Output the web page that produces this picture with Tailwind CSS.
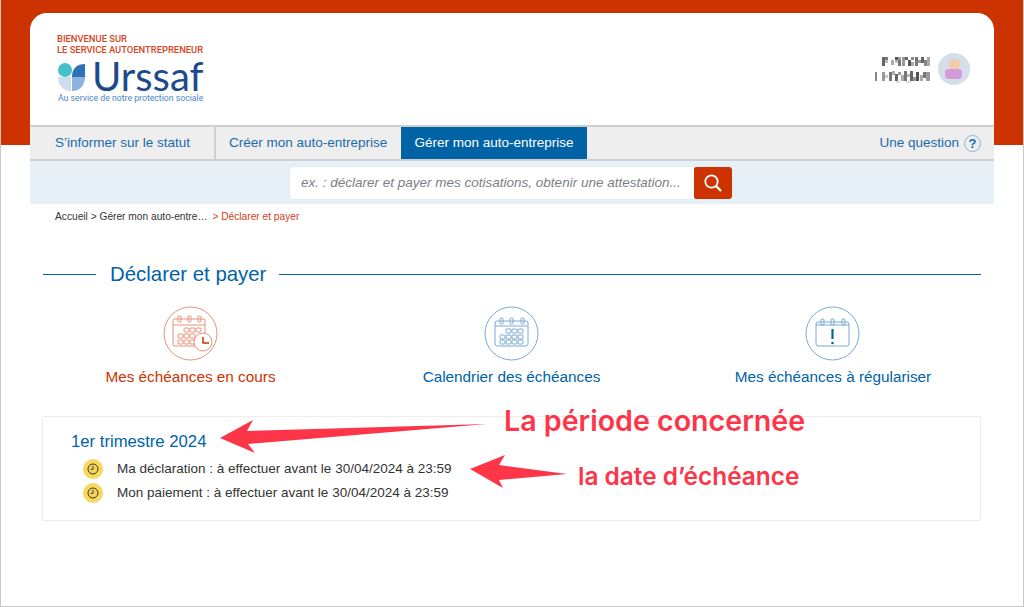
<!DOCTYPE html>
<html lang="fr">
  <head>
    <meta charset="UTF-8" />
    <title>Déclarer et payer</title>
    <script src="https://cdn.jsdelivr.net/npm/@tailwindcss/browser@4"></script>
  </head>
  <body class="bg-white font-['Liberation_Sans',Arial,sans-serif] text-[#333]">
    <div class="relative h-[607px] w-[1024px] overflow-hidden border border-[#c9c9c9] border-t-0">
      <!-- Bandeau orange -->
      <div class="absolute left-0 top-0 h-[145px] w-full bg-[#cc3300]"></div>

      <div class="relative ml-[29px] mt-[13px] w-[964px]">
        <!-- Header -->
        <header class="flex h-[112px] justify-between rounded-t-[17px] bg-white pl-[27px] pr-[24px]">
          <div class="pt-[20px]">
            <p class="whitespace-nowrap font-['Roboto',sans-serif] text-[9.4px] font-medium uppercase leading-[11px] text-[#d9441e]">Bienvenue sur<br />Le service autoentrepreneur</p>
            <div class="mt-[5px] flex h-[32px] items-center">
              <svg width="30" height="29" viewBox="0 0 30 29" class="mt-[1px]">
                <path d="M1 15h13v14C6 29 1 23 1 15z" fill="#cfdcf0" />
                <path d="M15 15h13c0 8-5 14-13 14z" fill="#8eb2de" />
                <path d="M15 15C15 6 20 2 28 2v13z" fill="#2c72b8" />
                <circle cx="8" cy="8" r="7" fill="#45c1cb" />
              </svg>
              <span class="ml-[5px] font-['Lato',sans-serif] text-[40px] font-normal leading-[32px] text-[#1e4a8c]">Urssaf</span>
            </div>
            <p class="mt-[1px] whitespace-nowrap pl-px font-['Roboto',sans-serif] text-[8.7px] leading-[11px] text-[#4a86c8]">Au service de notre protection sociale</p>
          </div>
          <div class="flex items-start gap-[7px] pt-[40px]">
            <!-- nom floute -->
            <svg width="56" height="27" viewBox="0 0 56 27" class="mt-[3px]">
              <rect x="7" y="1" width="3" height="9" fill="#666" /><rect x="10" y="1" width="3" height="3" fill="#777" /><rect x="10" y="4" width="3" height="3" fill="#bbb" />
              <rect x="16" y="4" width="3" height="5" fill="#aaa" /><rect x="20" y="1" width="3" height="3" fill="#555" /><rect x="23" y="1" width="3" height="3" fill="#999" />
              <rect x="20" y="4" width="3" height="3" fill="#bbb" /><rect x="23" y="4" width="3" height="6" fill="#777" /><rect x="27" y="1" width="3" height="9" fill="#999" />
              <rect x="30" y="1" width="3" height="3" fill="#666" /><rect x="33" y="4" width="3" height="6" fill="#555" /><rect x="36" y="1" width="3" height="3" fill="#888" />
              <rect x="36" y="6" width="3" height="4" fill="#aaa" /><rect x="40" y="1" width="3" height="9" fill="#777" /><rect x="43" y="4" width="3" height="3" fill="#999" />
              <rect x="46" y="1" width="3" height="6" fill="#666" /><rect x="49" y="4" width="3" height="6" fill="#888" /><rect x="52" y="1" width="3" height="9" fill="#aaa" />
              <rect x="0" y="16" width="2" height="9" fill="#888" /><rect x="7" y="16" width="3" height="9" fill="#999" /><rect x="10" y="19" width="3" height="3" fill="#ccc" />
              <rect x="14" y="16" width="3" height="9" fill="#777" /><rect x="17" y="15" width="3" height="4" fill="#aaa" /><rect x="20" y="18" width="3" height="7" fill="#666" />
              <rect x="23" y="16" width="3" height="3" fill="#999" /><rect x="26" y="19" width="3" height="6" fill="#aaa" /><rect x="29" y="15" width="3" height="10" fill="#777" />
              <rect x="32" y="18" width="3" height="3" fill="#bbb" /><rect x="35" y="15" width="3" height="10" fill="#666" /><rect x="38" y="21" width="3" height="4" fill="#999" />
              <rect x="41" y="16" width="3" height="9" fill="#555" /><rect x="45" y="19" width="3" height="6" fill="#aaa" /><rect x="48" y="16" width="3" height="6" fill="#777" />
              <rect x="51" y="16" width="4" height="9" fill="#999" /><rect x="21" y="25" width="4" height="2" fill="#ddd" /><rect x="31" y="25" width="5" height="2" fill="#ddd" />
            </svg>
            <div class="relative h-[32px] w-[32px] overflow-hidden rounded-full bg-[#d5dde8]">
              <div class="absolute left-[11px] top-[6px] h-[11px] w-[11px] rounded-full bg-[#f2cba8]"></div>
              <div class="absolute left-[7px] top-[16px] h-[10px] w-[17px] rounded-[4px] bg-[#d49adb]"></div>
            </div>
          </div>
        </header>

        <!-- Navigation -->
        <nav class="flex h-[36px] items-stretch border-y-2 border-[#cfcfcf] bg-[#eeeeee] text-[13.5px] text-[#1a6bab]">
          <a class="flex w-[186px] items-center border-r-2 border-[#cfcfcf] pl-[25px]">S’informer sur le statut</a>
          <a class="flex w-[185px] items-center pl-[13px]">Créer mon auto-entreprise</a>
          <a class="flex w-[186px] items-center justify-center bg-[#0063a6] text-white">Gérer mon auto-entreprise</a>
          <a class="ml-auto flex items-center gap-[5px] pr-[13px]">Une question
            <span class="flex h-[17px] w-[17px] items-center justify-center rounded-full border border-[#8db4d6] text-[13px] font-bold leading-none">?</span>
          </a>
        </nav>

        <!-- Recherche -->
        <div class="flex h-[43px] items-center justify-center bg-[#e7f0f7] pr-[2px]">
          <div class="flex h-[32px] w-[442px] overflow-hidden rounded-[3px] bg-white shadow-[0_0_1px_#b9c4cd]">
            <span class="flex-1 whitespace-nowrap pl-[11px] text-[13.5px] italic leading-[32px] text-[#7b7f85]">ex. : déclarer et payer mes cotisations, obtenir une attestation...</span>
            <span class="flex w-[38px] items-center justify-center rounded-[2px] bg-[#cc3300]">
              <svg width="20" height="20" viewBox="0 0 20 20" fill="none" stroke="white" stroke-width="1.8">
                <circle cx="8.5" cy="8.5" r="6.2" />
                <path d="M13 13l5 5" stroke-width="2.4" />
              </svg>
            </span>
          </div>
        </div>
      </div>

      <div class="relative ml-[29px] w-[964px]">
        <!-- Fil d'ariane -->
        <p class="pl-[25px] pt-[6px] text-[10.2px] leading-[13px] text-[#333]">Accueil &gt; Gérer mon auto-entre… <span class="ml-[2px] text-[#d9401a]">&gt; Déclarer et payer</span></p>

        <!-- Titre -->
        <div class="ml-[13px] mt-[39px] flex w-[938px] items-center">
          <div class="h-px w-[53px] bg-[#0063a6]"></div>
          <h1 class="pl-[14px] pr-[13px] text-[20.4px] leading-[24px] text-[#0063a6]">Déclarer et payer</h1>
          <div class="h-px flex-1 bg-[#0063a6]"></div>
        </div>

        <!-- Onglets -->
        <div class="ml-[13px] mt-[20px] flex w-[938px] text-[15.3px] leading-[18px]">
          <div class="flex w-[295px] flex-col items-center text-[#cc3300]">
            <svg width="56" height="56" viewBox="0 0 56 56" fill="none" stroke="#e8907a" stroke-width="1">
              <circle cx="27.5" cy="27.5" r="26.5" />
              <rect x="10" y="13" width="32" height="27" rx="2" />
              <path d="M10 19h32" />
              <rect x="15" y="10" width="3" height="6" rx="1" /><rect x="25" y="10" width="3" height="6" rx="1" /><rect x="35" y="10" width="3" height="6" rx="1" />
              <rect x="21" y="22" width="5" height="4" rx="1" /><rect x="27" y="22" width="5" height="4" rx="1" /><rect x="33" y="22" width="5" height="4" rx="1" />
              <rect x="15" y="28" width="5" height="4" rx="1" /><rect x="21" y="28" width="5" height="4" rx="1" /><rect x="27" y="28" width="5" height="4" rx="1" />
              <rect x="15" y="34" width="5" height="4" rx="1" /><rect x="21" y="34" width="5" height="4" rx="1" /><rect x="27" y="34" width="5" height="4" rx="1" />
              <circle cx="40" cy="36" r="9" fill="white" />
              <path d="M40 31v6h6" stroke="#cc3300" stroke-width="1.5" />
            </svg>
            <span class="mt-[6px]">Mes échéances en cours</span>
          </div>
          <div class="flex w-[347px] flex-col items-center text-[#0063a6]">
            <svg width="56" height="56" viewBox="0 0 56 56" fill="none" stroke="#7aa9d6" stroke-width="1">
              <circle cx="27.5" cy="27.5" r="26.5" />
              <rect x="11" y="15" width="33" height="25" rx="2" />
              <path d="M11 20h33" />
              <rect x="16" y="12" width="3" height="6" rx="1" /><rect x="26" y="12" width="3" height="6" rx="1" /><rect x="37" y="12" width="3" height="6" rx="1" />
              <rect x="22" y="23" width="5" height="4" rx="1" /><rect x="28" y="23" width="5" height="4" rx="1" /><rect x="34" y="23" width="5" height="4" rx="1" />
              <rect x="16" y="29" width="5" height="4" rx="1" /><rect x="22" y="29" width="5" height="4" rx="1" /><rect x="28" y="29" width="5" height="4" rx="1" /><rect x="34" y="29" width="5" height="4" rx="1" />
              <rect x="16" y="34" width="5" height="4" rx="1" /><rect x="22" y="34" width="5" height="4" rx="1" /><rect x="28" y="34" width="5" height="4" rx="1" /><rect x="34" y="34" width="5" height="4" rx="1" />
            </svg>
            <span class="mt-[6px]">Calendrier des échéances</span>
          </div>
          <div class="flex w-[296px] flex-col items-center text-[#0063a6]">
            <svg width="56" height="56" viewBox="0 0 56 56" fill="none" stroke="#7aa9d6" stroke-width="1">
              <circle cx="27.5" cy="27.5" r="26.5" />
              <rect x="11" y="16" width="33" height="24" rx="2" />
              <path d="M11 19h33" />
              <rect x="16" y="13" width="3" height="6" rx="1" /><rect x="26" y="13" width="3" height="6" rx="1" /><rect x="37" y="13" width="3" height="6" rx="1" />
              <path d="M27.5 23v10" stroke="#0063a6" stroke-width="2.2" />
              <circle cx="27.5" cy="37" r="1.3" fill="#0063a6" stroke="none" />
            </svg>
            <span class="mt-[6px]">Mes échéances à régulariser</span>
          </div>
        </div>

        <!-- Periode -->
        <section class="ml-[12px] mt-[30px] h-[105px] w-[939px] rounded-[2px] border border-[#ececec] pl-[28px] pt-[15px]">
          <h2 class="text-[16.7px] leading-[19px] text-[#0063a6]">1er trimestre 2024</h2>
          <div class="mt-[6px] flex h-[24px] items-center gap-[14px] pl-[12px] text-[13.5px] text-[#333]">
            <span class="flex h-[20px] w-[20px] items-center justify-center rounded-full bg-[#f8d75e]">
              <svg width="12" height="12" viewBox="0 0 12 12" fill="none" stroke="#3a3420" stroke-width="1"><circle cx="6" cy="6" r="5" /><path d="M6 3v3.3H3.6" /></svg>
            </span>
            Ma déclaration : à effectuer avant le 30/04/2024 à 23:59
          </div>
          <div class="flex h-[24px] items-center gap-[14px] pl-[12px] text-[13.5px] text-[#333]">
            <span class="flex h-[20px] w-[20px] items-center justify-center rounded-full bg-[#f8d75e]">
              <svg width="12" height="12" viewBox="0 0 12 12" fill="none" stroke="#3a3420" stroke-width="1"><circle cx="6" cy="6" r="5" /><path d="M6 3v3.3H3.6" /></svg>
            </span>
            Mon paiement : à effectuer avant le 30/04/2024 à 23:59
          </div>
        </section>
      </div>

      <!-- Annotations -->
      <svg class="absolute left-[-1px] top-0" width="1024" height="607" viewBox="0 0 1024 607">
        <polygon points="220,438 253,420 247,431 487,424 248,444 255,453" fill="#fc3549" />
        <polygon points="470,469 505,455 499,465 567,474 499,480 503,488" fill="#fc3549" />
      </svg>
      <span class="absolute left-[503px] top-[403px] whitespace-nowrap font-['Inter',sans-serif] text-[28.6px] font-semibold leading-[36px] text-[#fc3549] [text-shadow:0_0_3px_white]">La période concernée</span>
      <span class="absolute left-[577px] top-[462px] whitespace-nowrap font-['Inter',sans-serif] text-[24.4px] font-semibold leading-[28px] text-[#fc3549] [text-shadow:0_0_3px_white]">la date d’échéance</span>
    </div>
  </body>
</html>
